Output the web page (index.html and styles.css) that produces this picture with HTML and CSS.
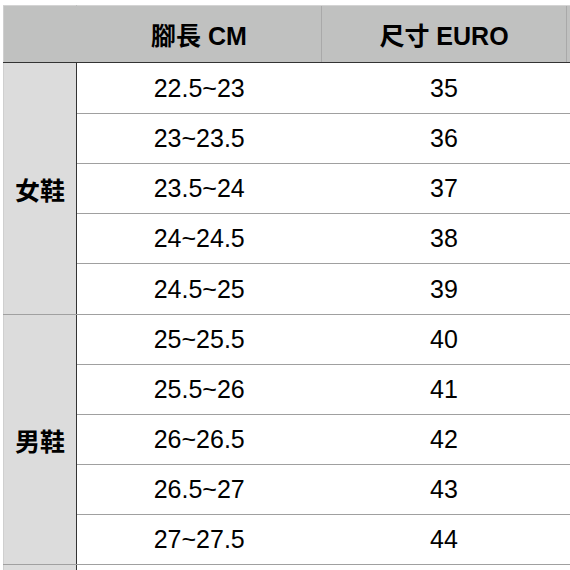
FILE: index.html
```html
<!DOCTYPE html>
<html lang="zh-Hant">
<head>
<meta charset="utf-8">
<title>尺寸表</title>
<link rel="stylesheet" href="styles.css">
</head>
<body>
<div class="wrap">
<table class="size-table">
  <thead>
    <tr>
      <th class="corner"></th>
      <th class="col">腳長 CM</th>
      <th class="col">尺寸 EURO</th>
      <th class="col extra"></th>
    </tr>
  </thead>
  <tbody>
    <tr class="tall"><th class="group" rowspan="5">女鞋</th><td>22.5~23</td><td>35</td><td class="extra"></td></tr>
    <tr><td>23~23.5</td><td>36</td><td class="extra"></td></tr>
    <tr><td>23.5~24</td><td>37</td><td class="extra"></td></tr>
    <tr><td>24~24.5</td><td>38</td><td class="extra"></td></tr>
    <tr class="tall"><td>24.5~25</td><td>39</td><td class="extra"></td></tr>
    <tr><th class="group" rowspan="5">男鞋</th><td>25~25.5</td><td>40</td><td class="extra"></td></tr>
    <tr><td>25.5~26</td><td>41</td><td class="extra"></td></tr>
    <tr><td>26~26.5</td><td>42</td><td class="extra"></td></tr>
    <tr><td>26.5~27</td><td>43</td><td class="extra"></td></tr>
    <tr><td>27~27.5</td><td>44</td><td class="extra"></td></tr>
    <tr><th class="group" rowspan="2"></th><td></td><td></td><td class="extra"></td></tr>
  </tbody>
</table>
</div>
</body>
</html>
```
FILE: styles.css
```css
html, body {
  margin: 0;
  padding: 0;
  background: #ffffff;
  overflow: hidden;
}
.wrap {
  width: 570px;
  height: 570px;
  overflow: hidden;
  padding: 5px 0 0 3px;
  box-sizing: border-box;
}
.size-table {
  border-collapse: collapse;
  table-layout: fixed;
  width: 620px;
  font-family: "Liberation Sans", "Noto Sans CJK TC", sans-serif;
  font-size: 25px;
  color: #000;
}
.size-table th,
.size-table td {
  padding: 0;
  text-align: center;
  vertical-align: middle;
}
.size-table thead th {
  background: #c0c1c0;
  height: 56px;
  font-weight: bold;
  border-top: 1px solid #d4d4d4;
  border-bottom: 1px solid #333333;
  border-left: 1px solid #a9a9a9;
}
.size-table thead th.corner {
  width: 72px;
  border-left: 1px solid #cfcfcf;
  border-right: 1px solid #c0c1c0;
}
.size-table thead th.col {
  width: 244px;
}
.size-table tbody td {
  height: 49px;
  border-bottom: 1px solid #a0a0a0;
}
.size-table tbody tr.tall td {
  height: 50px;
}
.size-table tbody th.group {
  background: #dcdcdc;
  font-weight: bold;
  border-left: 1px solid #cfcfcf;
  border-right: 1px solid #333333;
  border-bottom: 1px solid #a0a0a0;
}
```
